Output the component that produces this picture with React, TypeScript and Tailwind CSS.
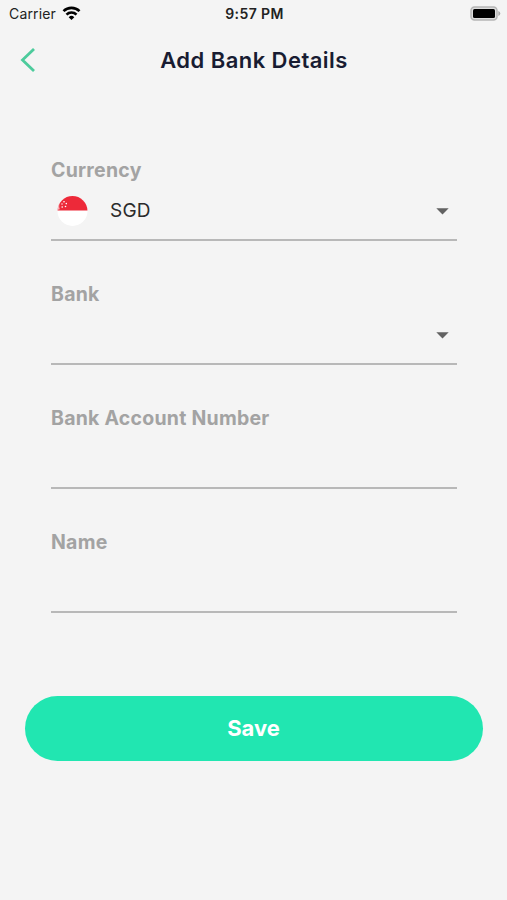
import React from "react";

function Caret() {
  return (
    <svg width="13" height="7" viewBox="0 0 13 7" className="mt-0.5 mr-[8px]">
      <path d="M.3.300h12.400L6.500 6.500z" fill="#626262" />
    </svg>
  );
}

function Field({ label, children }: { label: string; children?: React.ReactNode }) {
  return (
    <div className="flex h-[124px] flex-col">
      <div className="h-6 pt-px text-[19.5px] leading-6 font-bold tracking-[0.24px] text-[#a3a3a3]">{label}</div>
      <div className="flex h-[60px] items-center justify-between border-b-2 border-[#b8b8b8]">{children}</div>
    </div>
  );
}

function Flag() {
  return (
    <svg width="32" height="32" viewBox="0 0 32 32" className="-mt-px">
      <defs>
        <clipPath id="flag-round"><circle cx="16.500" cy="16" r="15" /></clipPath>
      </defs>
      <g clipPath="url(#flag-round)">
        <path fill="#fff" d="M0 0h32v32H0z" />
        <path fill="#ed2939" d="M0 0h32v15.500H0z" />
        <path fill="#fff" d="M5 5.500Q2 9 3.800 14.200L1 15V5z" opacity=".65" />
        <g fill="#fff"><circle cx="8" cy="6.800" r=".8" /><circle cx="6" cy="9" r=".7" /><circle cx="10.300" cy="8.600" r=".8" /><circle cx="6.200" cy="12" r=".8" /><circle cx="9.500" cy="11.500" r=".8" /></g>
      </g>
    </svg>
  );
}

export default function App() {
  return (
    <main className="flex h-[900px] w-[507px] flex-col bg-[#f4f4f4] font-['Inter',sans-serif]">
      <div className="grid h-7 grid-cols-3 items-center pr-[6px] pb-px pl-[9px] text-[14px] text-[#222]">
        <div className="flex items-center gap-[6px]">
          <span className="tracking-[0.15px]">Carrier</span>
          <svg width="19" height="14" viewBox="0 0 18 14" fill="none" stroke="#000" strokeWidth="2.600" className="-mt-0.5">
            <path d="M1 5.200a11.300 11.300 0 0 1 16 0M4 8.600a7 7 0 0 1 10 0" />
            <path d="M9 14 6.200 11.200a4 4 0 0 1 5.600 0z" fill="#000" stroke="none" />
          </svg>
        </div>
        <span className="pr-px text-center font-semibold tracking-[0.4px]">9:57 PM</span>
        <svg className="justify-self-end" width="31" height="15" viewBox="0 0 31 15">
          <rect x="1" y="1" width="26" height="13" rx="3.500" fill="#ddd" stroke="#b5b5b5" strokeWidth="1.500" />
          <rect x="3" y="3" width="22" height="9" rx="1.500" fill="#000" />
          <path d="M28.300 5v5q2-.8 2-2.500T28.300 5" fill="#aaa" />
        </svg>
      </div>
      <header className="grid h-16 grid-cols-[60px_1fr_60px] items-center">
        <svg className="ml-5" width="16" height="24" viewBox="0 0 16 24" fill="none" stroke="#4dcb9c" strokeWidth="2.800">
          <path d="M14 1 2.500 12 14 23" />
        </svg>
        <h1 className="pl-px text-center text-[22px] font-semibold tracking-[0.45px] text-[#181c32]">Add Bank Details</h1>
      </header>
      <section className="mt-[65px] mr-[50px] ml-[51px]">
        <Field label="Currency">
          <div className="flex items-center pt-[2px] pl-[5px] text-[19px] text-[#2b2b2b]"><Flag /><span className="ml-[22px] pt-px tracking-[0.2px]">SGD</span></div>
          <Caret />
        </Field>
        <Field label="Bank"><span /><Caret /></Field>
        <Field label="Bank Account Number" />
        <Field label="Name" />
      </section>
      <button className="mt-[43px] mr-[24px] ml-[25px] h-[65px] rounded-full bg-[#21e6b1] pr-px text-[22px] font-bold text-white">Save</button>
    </main>
  );
}
